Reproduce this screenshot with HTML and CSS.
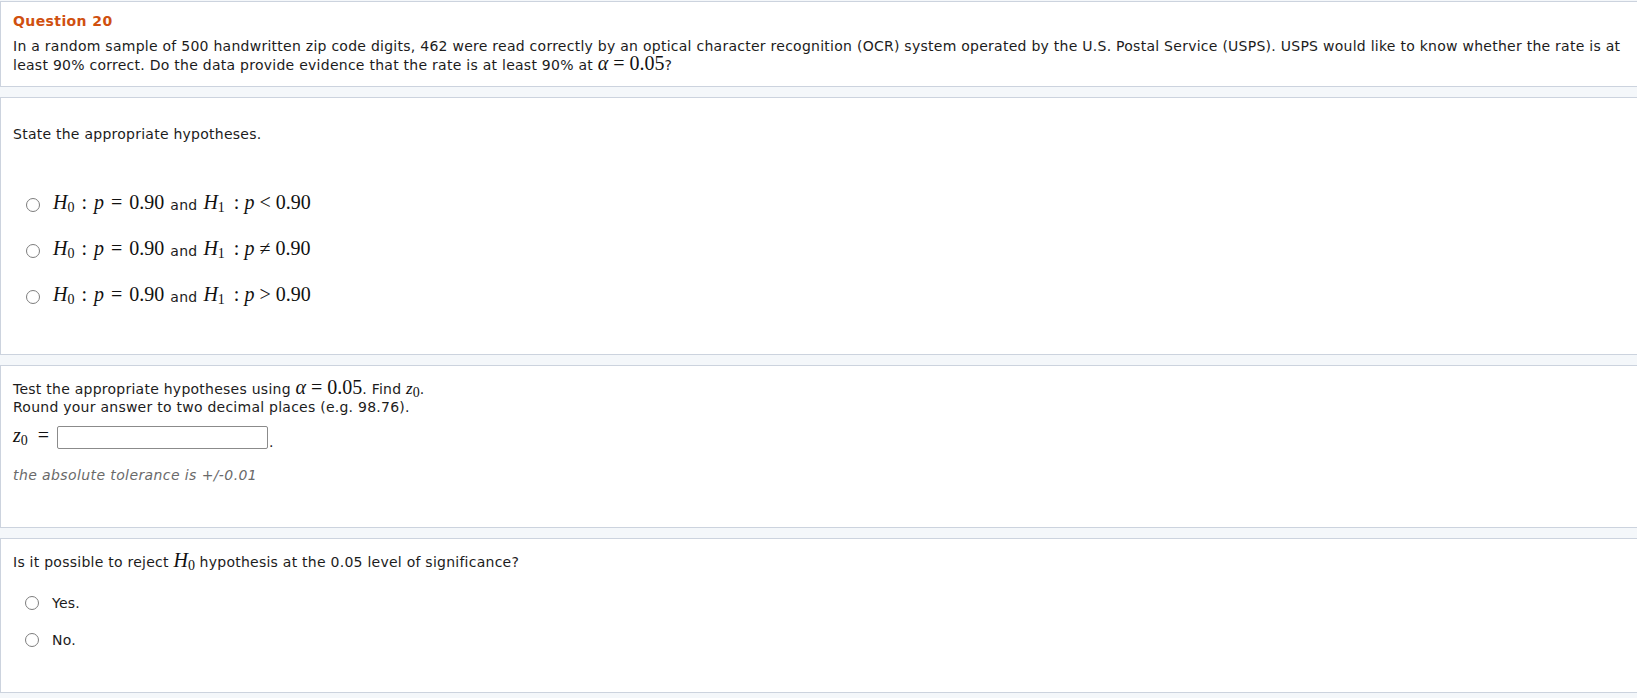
FILE: index.html
```html
<!DOCTYPE html>
<html lang="en">
  <head>
    <meta charset="UTF-8" />
    <title>Question 20</title>
    <link rel="stylesheet" href="styles.css">
  </head>
  <body>
    <div class="page">
      <div class="panel panel-question">
        <div class="q-title">Question 20</div>
        <p class="q-text">
          In a random sample of 500 handwritten zip code digits, 462 were read correctly by an optical character recognition (OCR) system operated by the U.S. Postal Service (USPS). USPS would like to know whether the rate is at least 90% correct. Do the data provide evidence that the rate is at least 90% at <span class="m"><i>α</i> = 0.05</span>?
        </p>
      </div>

      <div class="panel panel-hyp">
        <p class="prompt">State the appropriate hypotheses.</p>
        <div class="options">
          <label class="opt">
            <input type="radio" name="hyp" />
            <span class="m m-wide"><i>H</i><sub>0</sub> : <i>p</i> = 0.90</span>
            <span class="and">and</span>
            <span class="m"><i>H</i><sub>1</sub>&thinsp; : <i>p</i> &lt; 0.90</span>
          </label>
          <label class="opt">
            <input type="radio" name="hyp" />
            <span class="m m-wide"><i>H</i><sub>0</sub> : <i>p</i> = 0.90</span>
            <span class="and">and</span>
            <span class="m"><i>H</i><sub>1</sub>&thinsp; : <i>p</i> ≠ 0.90</span>
          </label>
          <label class="opt">
            <input type="radio" name="hyp" />
            <span class="m m-wide"><i>H</i><sub>0</sub> : <i>p</i> = 0.90</span>
            <span class="and">and</span>
            <span class="m"><i>H</i><sub>1</sub>&thinsp; : <i>p</i> &gt; 0.90</span>
          </label>
        </div>
      </div>

      <div class="panel panel-test">
        <p class="prompt">
          Test the appropriate hypotheses using <span class="m"><i>α</i> = 0.05</span>. Find <span class="m m-small"><i>z</i><sub>0</sub></span>.<br />
          Round your answer to two decimal places (e.g. 98.76).
        </p>
        <div class="answer-row">
          <span class="m"><i>z</i><sub>0</sub> &nbsp;=</span>
          <input type="text" class="answer" />
          <span class="dot">.</span>
        </div>
        <p class="tolerance">the absolute tolerance is +/-0.01</p>
      </div>

      <div class="panel panel-reject">
        <p class="prompt">
          Is it possible to reject <span class="m"><i>H</i><sub>0</sub></span> hypothesis at the 0.05 level of significance?
        </p>
        <div class="options options-tight">
          <label class="opt">
            <input type="radio" name="reject" />
            <span>Yes.</span>
          </label>
          <label class="opt">
            <input type="radio" name="reject" />
            <span>No.</span>
          </label>
        </div>
      </div>
    </div>
  </body>
</html>
```

FILE: styles.css
```css
* {
  margin: 0;
  padding: 0;
  box-sizing: border-box;
}
body {
  background: #f4f7fa;
  font-family: "DejaVu Sans", Verdana, sans-serif;
  font-size: 14px;
  letter-spacing: 0.25px;
  color: #1c1c1c;
  overflow: hidden;
}
.page {
  padding-top: 1px;
  display: flex;
  flex-direction: column;
  gap: 10px;
  width: 1660px;
}
.panel {
  background: #fff;
  border: 1px solid #ccd3de;
  border-right: none;
  padding: 10px 13px 11px 12px;
}
.q-title {
  color: #d0500f;
  font-weight: bold;
  letter-spacing: 0.4px;
  line-height: 18px;
}
.q-text {
  margin-top: 7px;
  line-height: 19px;
  letter-spacing: 0.26px;
  width: 1620px;
}
p {
  line-height: 18px;
}
.m {
  font-family: "Liberation Serif", "Times New Roman", serif;
  font-size: 20px;
  letter-spacing: 0;
  line-height: 0;
  color: #111;
}
.m i {
  font-style: italic;
}
.m sub {
  font-size: 14px;
  vertical-align: -3px;
  line-height: 0;
}
.m-wide {
  word-spacing: 2px;
}
.m-small {
  font-size: 17px;
}
.panel-hyp {
  padding-top: 27px;
  padding-bottom: 44px;
  height: 258px;
}
.options {
  margin-top: 50px;
  display: flex;
  flex-direction: column;
  gap: 22px;
}
.opt {
  display: flex;
  align-items: center;
  gap: 6px;
  height: 24px;
  padding-left: 13px;
}
.opt .and {
  font-size: 14px;
}
.opt input {
  appearance: none;
  -webkit-appearance: none;
  width: 14px;
  height: 14px;
  border: 1px solid #7d7d7d;
  border-radius: 50%;
  background: #fff;
  margin-right: 7px;
  flex: none;
}
.panel-test {
  padding-top: 14px;
  height: 163px;
}
.answer-row {
  margin-top: 10px;
  display: flex;
  align-items: center;
  gap: 8px;
  height: 23px;
}
.answer {
  width: 211px;
  height: 23px;
  border: 1px solid #8b8b8b;
  border-radius: 2px;
  background: #fff;
}
.dot {
  margin-left: -7px;
  align-self: flex-end;
  line-height: 14px;
}
.tolerance {
  margin-top: 17px;
  font-style: italic;
  letter-spacing: 0.4px;
  color: #6a6a6a;
}
.panel-reject {
  padding-top: 14px;
  height: 155px;
}
.options-tight {
  margin-top: 20px;
  gap: 13px;
}
.options-tight .opt {
  padding-left: 12px;
}
```
